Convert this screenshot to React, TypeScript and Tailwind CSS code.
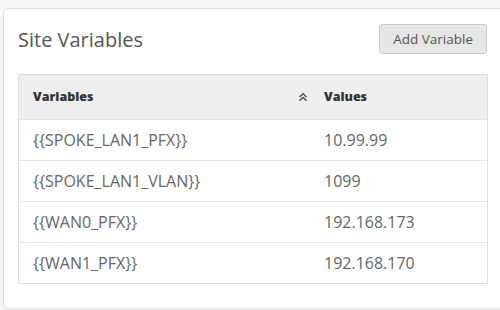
import { ReactNode } from "react";

const rows = [
  { name: "{{SPOKE_LAN1_PFX}}", value: "10.99.99" },
  { name: "{{SPOKE_LAN1_VLAN}}", value: "1099" },
  { name: "{{WAN0_PFX}}", value: "192.168.173" },
  { name: "{{WAN1_PFX}}", value: "192.168.170" },
];

function SortIcon() {
  return (
    <svg width="10" height="10" viewBox="0 0 10 10" fill="none" stroke="#555" strokeWidth="1.5">
      <path d="M1.5 5 L5 1.8 L8.5 5" />
      <path d="M1.5 8.6 L5 5.4 L8.5 8.6" />
    </svg>
  );
}

function Cell({ children, className = "" }: { children: ReactNode; className?: string }) {
  return <div className={`flex items-center pl-[14px] ${className}`}>{children}</div>;
}

export default function App() {
  return (
    <div
      className="w-[500px] h-[310px] overflow-hidden bg-[#f6f6f6] pt-[8px] pl-[3px]"
      style={{ fontFamily: '"Open Sans", sans-serif' }}
    >
      <div className="w-[530px] h-[301px] bg-white border border-[#dedede] rounded-[5px] pl-[14px] pt-[15px]">
        <div className="w-[469px] flex items-center justify-between h-[30px]">
          <h2 className="text-[20px] text-[#555] leading-none mt-[1px]">Site Variables</h2>
          <button className="h-[30px] px-[13px] bg-[#e6e6e6] border border-[#c8c8c8] rounded-[3px] text-[13.5px] text-[#555]">
            Add Variable
          </button>
        </div>

        <div className="w-[470px] mt-[20px] border border-[#dedede]">
          {/* header */}
          <div className="grid grid-cols-[291px_1fr] h-[44px] bg-[#eeeeee] text-[12.5px] font-extrabold text-[#333]">
            <Cell className="justify-between pr-[2px]">
              <span>Variables</span>
              <SortIcon />
            </Cell>
            <Cell>Values</Cell>
          </div>

          {/* rows */}
          {rows.map((r) => (
            <div
              key={r.name}
              className="grid grid-cols-[291px_1fr] h-[41px] border-t border-[#e3e3e3] text-[16px] text-[#666]"
            >
              <Cell>{r.name}</Cell>
              <Cell>{r.value}</Cell>
            </div>
          ))}
        </div>
      </div>
    </div>
  );
}
